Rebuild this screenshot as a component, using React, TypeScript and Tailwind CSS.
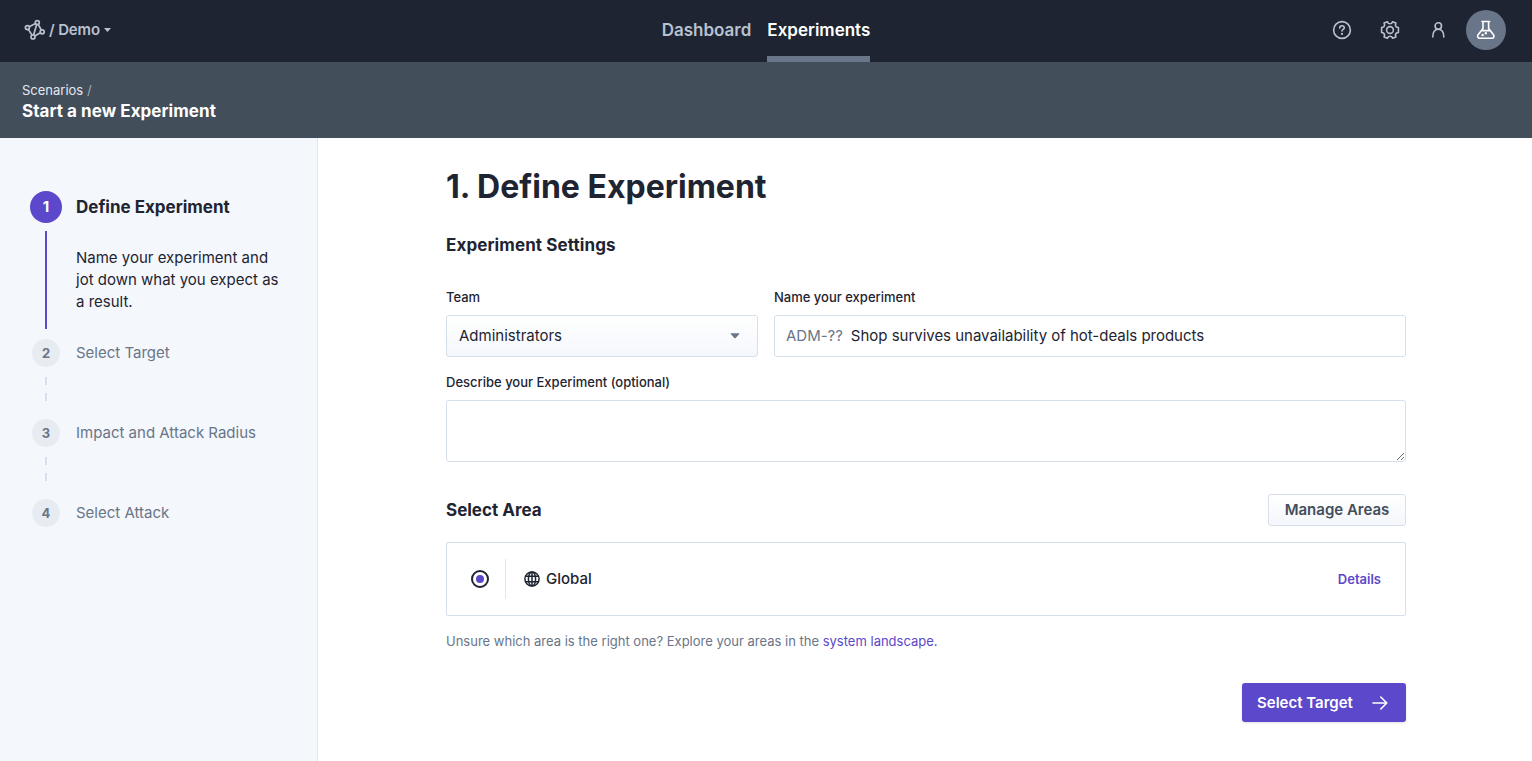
import React from "react";

const LogoIcon = () => (
  <svg width="22" height="22" viewBox="0 0 22 22" fill="none" stroke="currentColor" strokeWidth="1.7">
    <circle cx="13.3" cy="3.6" r="2" />
    <circle cx="3.4" cy="8.6" r="2" />
    <circle cx="18.2" cy="12.8" r="2" />
    <circle cx="9" cy="18" r="2" />
    <path d="M11.5 4.5 5.2 7.7M14.2 5.4l3.1 5.600M16.4 13.8l-5.700 3.300M4.300 10.4l3.800 5.800M12.7 5.6 9.600 16" />
  </svg>
);

const HelpIcon = () => (
  <svg width="20" height="20" viewBox="0 0 20 20" fill="none" stroke="currentColor" strokeWidth="1.6" strokeLinecap="round">
    <circle cx="10" cy="10" r="8.4" />
    <path d="M7.7 8c0-1.4 1-2.3 2.3-2.3s2.3.9 2.3 2.1c0 1.6-2.3 1.7-2.3 3.3" />
    <circle cx="10" cy="13.9" r="1.1" fill="currentColor" stroke="none" />
  </svg>
);

const GearIcon = () => (
  <svg width="20" height="20" viewBox="0 0 20 20" fill="none" stroke="currentColor" strokeWidth="1.6" strokeLinejoin="round">
    <path d="M7.4 1.7 8.4 3.4Q10 4.2 11.6 3.4L12.6 1.7 15.9 3.1 15.4 5Q15.4 6.1 16.6 7L18.4 7.600V12.4L16.6 13Q15.4 13.9 15.4 15L15.9 16.9 12.6 18.3 11.6 16.6Q10 15.8 8.4 16.6L7.4 18.3 4.1 16.9 4.6 15Q4.6 13.9 3.4 13L1.6 12.4V7.6L3.4 7Q4.6 6.1 4.6 5L4.1 3.1Z" />
    <circle cx="10" cy="10" r="3.4" />
  </svg>
);

const PersonIcon = () => (
  <svg width="16" height="18" viewBox="0 0 16 18" fill="none" stroke="currentColor" strokeWidth="1.6" strokeLinecap="round">
    <circle cx="8.300" cy="5" r="3.200" />
    <path d="M2.800 16c0-5 2-7.700 5.500-7.700s5.500 2.700 5.500 7.700" />
  </svg>
);

const FlaskIcon = () => (
  <svg width="20" height="20" viewBox="0 0 20 20" fill="none" stroke="currentColor" strokeWidth="1.6" strokeLinecap="round" strokeLinejoin="round">
    <path d="M6 1.500h7.600M7 1.700v6.700L2.100 14.800c-1.100 1.700-.2 3.500 1.600 3.500h12.200c1.800 0 2.700-1.800 1.600-3.500L12.600 8.400V1.700M6 10.600h7.600" />
    <circle cx="6.600" cy="15" r="1.200" fill="currentColor" stroke="none" />
    <circle cx="9.800" cy="13.200" r="1.200" fill="currentColor" stroke="none" />
  </svg>
);

const GlobeIcon = () => (
  <svg width="16" height="16" viewBox="0 0 16 16" fill="none" stroke="currentColor" strokeWidth="1.5">
    <circle cx="8" cy="8" r="7.1" />
    <ellipse cx="8" cy="8" rx="3.6" ry="7.1" />
    <path d="M1.5 5.3h13M1.5 10.700h13M8 .9v14.2" />
  </svg>
);

const ArrowIcon = () => (
  <svg width="16" height="16" viewBox="0 0 16 16" fill="none" stroke="currentColor" strokeWidth="1.6" strokeLinecap="round" strokeLinejoin="round">
    <path d="M1 8h13.800M8.800 2 14.800 8l-6 6" />
  </svg>
);

const steps = ["Select Target", "Impact and Attack Radius", "Select Attack"];

function Header() {
  return (
    <header className="grid h-[62px] grid-cols-3 bg-[#1e2431] text-[#b8c1d0]">
      <div className="flex items-center pb-[2px] pl-6">
        <LogoIcon />
        <span className="ml-[3px] text-[15px] font-semibold tracking-[-0.01em]">/ Demo</span>
        <svg className="ml-1" width="7" height="4" viewBox="0 0 7 4" fill="currentColor">
          <path d="M0 0h7L3.5 4z" />
        </svg>
      </div>
      <nav className="flex justify-center gap-4 text-[17px] font-semibold">
        <a className="flex h-full items-center">Dashboard</a>
        <a className="flex h-full items-center border-b-6 border-[#697588] pt-[6px] text-white">Experiments</a>
      </nav>
      <div className="flex items-center justify-end pr-[26px] pb-[2px]">
        <HelpIcon />
        <span className="ml-7"><GearIcon /></span>
        <span className="ml-[30px]"><PersonIcon /></span>
        <span className="ml-5 flex size-10 items-center justify-center rounded-full bg-[#697588] text-white">
          <FlaskIcon />
        </span>
      </div>
    </header>
  );
}

function Sidebar() {
  return (
    <aside className="w-[318px] shrink-0 border-r border-[#e3e8f0] bg-[#f4f7fc] pt-[53px] pl-[30px]">
      <div className="flex h-8 items-center">
        <span className="flex size-8 items-center justify-center rounded-full bg-[#5c48ca] text-[15px] font-bold text-white">1</span>
        <span className="ml-[14px] pt-[2px] text-[17px] font-bold">Define Experiment</span>
      </div>
      <div className="mt-2 flex h-[98px]">
        <div className="ml-[15px] w-[2px] bg-[#5c48ca]" />
        <p className="ml-[29px] pt-4 text-[15px] leading-[22px]">
          Name your experiment and
          <br />
          jot down what you expect as
          <br />a result.
        </p>
      </div>
      <ol className="mt-[10px] text-[#697588]">
        {steps.map((label, i) => (
          <li key={label} className="h-20">
            <div className="flex h-7 items-center pl-[2px]">
              <span className="flex size-7 items-center justify-center rounded-full bg-[#e7ecf3] pt-px text-[13px] font-bold">{i + 2}</span>
              <span className="ml-4 text-[15px]">{label}</span>
            </div>
            {i < 2 && (
              <div className="ml-[15px] flex flex-col gap-2 pt-[10px]">
                <div className="h-2 w-[2px] bg-[#d6dfeb]" />
                <div className="h-2 w-[2px] bg-[#d6dfeb]" />
              </div>
            )}
          </li>
        ))}
      </ol>
    </aside>
  );
}

export default function App() {
  return (
    <div className="flex h-[761px] flex-col overflow-hidden bg-white font-['Inter',sans-serif] text-[#1e2431]">
      <Header />
      <div className="h-[76px] shrink-0 bg-[#434e5b] pt-[19px] pl-[22px]">
        <div className="text-[13px] leading-[18px] text-[#e3e8f0]">
          Scenarios <span className="text-[#a0aaba]">/</span>
        </div>
        <div className="text-[17px] leading-6 font-bold tracking-[0.05px] text-white">Start a new Experiment</div>
      </div>
      <div className="flex flex-1">
        <Sidebar />
        <main className="ml-32 w-[960px] pt-[29px]">
          <h1 className="text-[32px] leading-10 font-bold">1. Define Experiment</h1>
          <h2 className="mt-[26px] text-[17px] leading-6 font-bold tracking-[0.1px]">Experiment Settings</h2>
          <div className="mt-[30px] flex gap-4">
            <div className="w-[312px]">
              <div className="text-[13px] leading-5 font-medium">Team</div>
              <div className="mt-2 flex h-[42px] items-center justify-between rounded-[3px] border border-[#d6dfeb] bg-linear-to-b from-white to-[#f4f7fc] pr-[17px] pl-3 text-[15px]">
                Administrators
                <svg width="10" height="6" viewBox="0 0 10 6" fill="#697588">
                  <path d="M1 .3h8q.8.2.3.8L5.7 5q-.7.7-1.4 0L.7 1.1Q.2.5 1 .3z" />
                </svg>
              </div>
            </div>
            <div className="flex-1">
              <div className="text-[13px] leading-5 font-medium">Name your experiment</div>
              <div className="mt-2 flex h-[42px] items-center rounded-[3px] border border-[#d6dfeb] pl-[11px] text-[15px] tracking-[-0.02px]">
                <span className="pt-px text-[#697588]">ADM-??</span>
                <span className="ml-2">Shop survives unavailability of hot-deals products</span>
              </div>
            </div>
          </div>
          <div className="mt-[15px] text-[13px] leading-5 font-medium">Describe your Experiment (optional)</div>
          <textarea className="mt-2 block h-[62px] w-full resize-y rounded-[3px] border border-[#d6dfeb]" />
          <div className="mt-8 flex h-8 items-center justify-between">
            <h2 className="pt-[2px] text-[17px] font-bold">Select Area</h2>
            <button className="flex h-8 w-[138px] items-center justify-center rounded-[3px] border border-[#d6dfeb] bg-linear-to-b from-white to-[#f4f7fc] text-[15px] font-semibold text-[#434e5b]">
              Manage Areas
            </button>
          </div>
          <div className="mt-4 flex h-[74px] items-center rounded-[2px] border border-[#d6dfeb] px-6">
            <span className="flex size-[18px] items-center justify-center rounded-full border-2 border-[#1e2431]">
              <span className="size-2 rounded-full bg-[#5c48ca]" />
            </span>
            <span className="mr-[18px] ml-4 h-10 w-px bg-[#e3e8f0]" />
            <GlobeIcon />
            <span className="ml-[6px] text-[15px] font-medium">Global</span>
            <a className="ml-auto pt-[2px] text-[13px] font-semibold text-[#5c48ca]">Details</a>
          </div>
          <p className="mt-[15px] text-[13px] leading-5 text-[#697588]">
            Unsure which area is the right one? Explore your areas in the <a className="text-[#5c48ca]">system landscape.</a>
          </p>
          <div className="mt-8 flex justify-end">
            <button className="flex h-[39px] w-[164px] items-center justify-between rounded-[3px] bg-[#5c48ca] pr-[18px] pl-[15px] text-[15px] font-semibold text-white shadow-sm">
              <span className="pt-px">Select Target</span>
              <ArrowIcon />
            </button>
          </div>
        </main>
      </div>
    </div>
  );
}
